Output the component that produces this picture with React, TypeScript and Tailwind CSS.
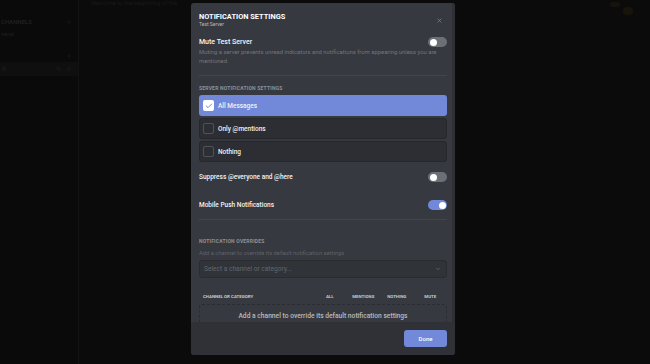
import React from "react";
import { X, ChevronDown, Check, Plus, UserPlus, Settings } from "lucide-react";

function Toggle({ on }: { on: boolean }) {
  return (
    <div
      className={
        on
          ? "w-[19px] h-[10px] rounded-full bg-[#7289da] flex items-center justify-end px-[1.5px]"
          : "w-[19px] h-[10px] rounded-full bg-[#6c6f75] flex items-center justify-start px-[1.5px]"
      }
    >
      <div className="w-[7px] h-[7px] rounded-full bg-white" />
    </div>
  );
}

function Option({ label, selected }: { label: string; selected?: boolean }) {
  return (
    <div
      className={
        selected
          ? "h-[21px] shrink-0 rounded-[3px] bg-[#7289da] flex items-center pl-[4px] gap-[4px]"
          : "h-[21px] shrink-0 rounded-[3px] bg-[#2c2e33] border border-[#25272b] flex items-center pl-[3px] gap-[4px]"
      }
    >
      {selected ? (
        <div className="w-[11px] h-[11px] rounded-[2px] bg-white flex items-center justify-center">
          <Check size={8} strokeWidth={3} color="#7289da" />
        </div>
      ) : (
        <div className="w-[11px] h-[11px] rounded-[2px] border border-[#4f5258]" />
      )}
      <span className="text-[6.5px] leading-[8px] font-medium text-[#f0f1f2]">{label}</span>
    </div>
  );
}

export default function App() {
  return (
    <div
      className="relative w-[650px] h-[364px] overflow-hidden bg-[#0b0b0c] flex"
      style={{ fontFamily: "Roboto, 'Liberation Sans', sans-serif" }}
    >
      {/* faint background app */}
      <div className="w-[79px] h-full border-r border-[#121213] bg-[#0a0a0b] flex flex-col pt-[18px] text-[#1f1f21]">
        <div className="flex items-center justify-between pl-[1px] pr-[6px] h-[8px]">
          <span className="text-[6px] font-bold leading-[8px]">CHANNELS</span>
          <Plus size={6} strokeWidth={2} color="#1f1f21" />
        </div>
        <div className="pl-[1px] mt-[4px] text-[6px] leading-[8px]">neral</div>
        <div className="flex justify-end pr-[6px] mt-[15px]">
          <Plus size={6} strokeWidth={2} color="#1f1f21" />
        </div>
        <div className="mt-[3px] h-[14px] bg-[#0f0f10] flex items-center justify-between pl-[2px] pr-[6px]">
          <span className="text-[6px] leading-[8px]">ff</span>
          <div className="flex gap-[5px]">
            <UserPlus size={6} color="#1f1f21" />
            <Settings size={6} color="#1f1f21" />
          </div>
        </div>
      </div>
      <div className="flex-1 h-full relative">
        <div className="pl-[12px] pt-[0px] text-[6px] leading-[5px] text-[#19191b]">
          Welcome to the beginning of the
        </div>
        <div className="absolute right-[10px] top-[2px] w-[30px] h-[14px] flex gap-[3px]">
          <div className="w-[10px] h-[5px] bg-[#15130b] rounded-sm" />
          <div className="w-[10px] h-[8px] bg-[#17150a] rounded-sm mt-[5px]" />
        </div>
      </div>

      {/* modal */}
      <div className="absolute left-[191px] top-[3px] w-[264px] h-[352px] rounded-[3px] bg-[#36393f] flex flex-col overflow-hidden">
        <div className="flex-1 min-h-0 overflow-hidden flex">
          <div className="flex-1 flex flex-col pl-[8px] pr-[5px] pt-[9px] *:shrink-0">
            {/* header */}
            <div className="flex justify-between">
              <div className="flex flex-col">
                <div className="text-[7.4px] leading-[9px] font-bold text-white">
                  NOTIFICATION SETTINGS
                </div>
                <div className="text-[5px] leading-[6px] text-[#b9bbbe]">Test Server</div>
              </div>
              <div className="pt-[5px] pr-[4px]">
                <X size={7} strokeWidth={2} color="#8e9297" />
              </div>
            </div>

            {/* mute */}
            <div className="mt-[10px] h-[10px] flex items-center justify-between">
              <span className="text-[7px] leading-[10px] font-medium text-[#f2f3f5]">Mute Test Server</span>
              <Toggle on={false} />
            </div>
            <div className="mt-[1px] text-[5.9px] leading-[9px] text-[#72767d]">
              Muting a server prevents unread indicators and notifications from appearing unless you are mentioned.
            </div>
            <div className="mt-[9px] h-px bg-[#42454a]" />

            <div className="mt-[9px] text-[5px] leading-[6px] font-bold tracking-[0.2px] text-[#8e9297]">
              SERVER NOTIFICATION SETTINGS
            </div>
            <div className="mt-[4px] flex flex-col gap-[2px]">
              <Option label="All Messages" selected />
              <Option label="Only @mentions" />
              <Option label="Nothing" />
            </div>

            <div className="mt-[10px] h-[10px] flex items-center justify-between">
              <span className="text-[6.5px] leading-[10px] font-medium text-[#f2f3f5]">Suppress @everyone and @here</span>
              <Toggle on={false} />
            </div>
            <div className="mt-[18px] h-[10px] flex items-center justify-between">
              <span className="text-[6.5px] leading-[10px] font-medium text-[#f2f3f5]">Mobile Push Notifications</span>
              <Toggle on />
            </div>
            <div className="mt-[9px] h-px bg-[#42454a]" />

            <div className="mt-[18px] h-[6px] text-[5px] leading-[6px] font-bold tracking-[0.2px] text-[#8e9297]">
              NOTIFICATION OVERRIDES
            </div>
            <div className="mt-[5px] h-[8px] text-[5.8px] leading-[8px] text-[#5f636a]">
              Add a channel to override its default notification settings
            </div>
            <div className="mt-[3px] h-[18px] rounded-[3px] bg-[#303338] border border-[#2a2c30] flex items-center justify-between pl-[4px] pr-[5px]">
              <span className="text-[6.6px] leading-[8px] text-[#63676e]">Select a channel or category...</span>
              <ChevronDown size={6} strokeWidth={2.5} color="#72767d" />
            </div>

            <div className="mt-[16px] h-[6px] flex items-center text-[4.4px] leading-[6px] font-bold text-[#c7c9cc]">
              <div className="flex-1 pl-[4px]">CHANNEL OR CATEGORY</div>
              <div className="w-[33.5px] text-center">ALL</div>
              <div className="w-[33.5px] text-center">MENTIONS</div>
              <div className="w-[33.5px] text-center">NOTHING</div>
              <div className="w-[33.5px] text-center">MUTE</div>
            </div>
            <div className="mt-[4px] h-[40px] rounded-[3px] border border-dashed border-[#2a2c31] flex justify-center pt-[7px]">
              <span className="text-[6.7px] leading-[8px] font-medium text-[#b9bbbe]">
                Add a channel to override its default notification settings
              </span>
            </div>
          </div>
          <div className="w-[3px] bg-[#2e3035]" />
        </div>

        {/* footer */}
        <div className="h-[33px] shrink-0 bg-[#2f3136] flex items-center justify-end pr-[8px]">
          <div className="w-[43px] h-[17px] rounded-[3px] bg-[#7289da] flex items-center justify-center">
            <span className="text-[6px] leading-[8px] font-medium text-white">Done</span>
          </div>
        </div>
      </div>
    </div>
  );
}
